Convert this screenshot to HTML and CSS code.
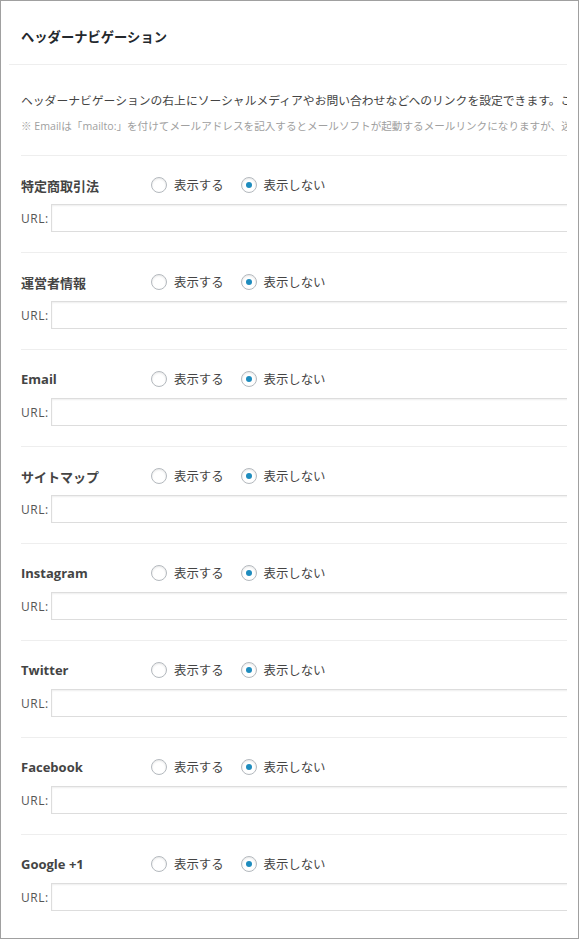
FILE: index.html
```html
<!DOCTYPE html>
<html lang="ja">
<head>
<meta charset="utf-8">
<title>ヘッダーナビゲーション</title>
<link rel="stylesheet" href="styles.css">
</head>
<body>
<div class="frame">
  <div class="panel">
    <div class="panel-head">
      <h2 class="title">ヘッダーナビゲーション</h2>
    </div>
    <div class="panel-body">
      <p class="desc">ヘッダーナビゲーションの右上にソーシャルメディアやお問い合わせなどへのリンクを設定できます。ここで設定したリンクはヘッダーに表示されます。</p>
      <p class="note">※ Emailは「mailto:」を付けてメールアドレスを記入するとメールソフトが起動するメールリンクになりますが、迷惑メールの原因になる場合があります。</p>

      <div class="row">
        <div class="row-top">
          <span class="label">特定商取引法</span>
          <label class="opt"><input type="radio" class="radio" name="r1">表示する</label>
          <label class="opt"><input type="radio" class="radio" name="r1" checked>表示しない</label>
        </div>
        <div class="row-url"><span class="url-label">URL:</span><input type="text" class="url-input"></div>
      </div>

      <div class="row">
        <div class="row-top">
          <span class="label">運営者情報</span>
          <label class="opt"><input type="radio" class="radio" name="r2">表示する</label>
          <label class="opt"><input type="radio" class="radio" name="r2" checked>表示しない</label>
        </div>
        <div class="row-url"><span class="url-label">URL:</span><input type="text" class="url-input"></div>
      </div>

      <div class="row">
        <div class="row-top">
          <span class="label">Email</span>
          <label class="opt"><input type="radio" class="radio" name="r3">表示する</label>
          <label class="opt"><input type="radio" class="radio" name="r3" checked>表示しない</label>
        </div>
        <div class="row-url"><span class="url-label">URL:</span><input type="text" class="url-input"></div>
      </div>

      <div class="row">
        <div class="row-top">
          <span class="label">サイトマップ</span>
          <label class="opt"><input type="radio" class="radio" name="r4">表示する</label>
          <label class="opt"><input type="radio" class="radio" name="r4" checked>表示しない</label>
        </div>
        <div class="row-url"><span class="url-label">URL:</span><input type="text" class="url-input"></div>
      </div>

      <div class="row">
        <div class="row-top">
          <span class="label">Instagram</span>
          <label class="opt"><input type="radio" class="radio" name="r5">表示する</label>
          <label class="opt"><input type="radio" class="radio" name="r5" checked>表示しない</label>
        </div>
        <div class="row-url"><span class="url-label">URL:</span><input type="text" class="url-input"></div>
      </div>

      <div class="row">
        <div class="row-top">
          <span class="label">Twitter</span>
          <label class="opt"><input type="radio" class="radio" name="r6">表示する</label>
          <label class="opt"><input type="radio" class="radio" name="r6" checked>表示しない</label>
        </div>
        <div class="row-url"><span class="url-label">URL:</span><input type="text" class="url-input"></div>
      </div>

      <div class="row">
        <div class="row-top">
          <span class="label">Facebook</span>
          <label class="opt"><input type="radio" class="radio" name="r7">表示する</label>
          <label class="opt"><input type="radio" class="radio" name="r7" checked>表示しない</label>
        </div>
        <div class="row-url"><span class="url-label">URL:</span><input type="text" class="url-input"></div>
      </div>

      <div class="row">
        <div class="row-top">
          <span class="label">Google +1</span>
          <label class="opt"><input type="radio" class="radio" name="r8">表示する</label>
          <label class="opt"><input type="radio" class="radio" name="r8" checked>表示しない</label>
        </div>
        <div class="row-url"><span class="url-label">URL:</span><input type="text" class="url-input"></div>
      </div>
    </div>
  </div>
</div>
</body>
</html>
```

FILE: styles.css
```css
html, body {
  margin: 0;
  padding: 0;
  background: #fff;
}

body {
  font-family: "Open Sans", "Noto Sans CJK JP", sans-serif;
  color: #444;
}

.frame {
  box-sizing: border-box;
  width: 579px;
  height: 939px;
  border: 1px solid #a0a0a0;
  background: #fff;
  padding: 0 11px 0 8px;
}

.panel {
  height: 100%;
  overflow: hidden;
}

.panel-head {
  padding: 26px 12px 17px;
  border-bottom: 1px solid #eeeeee;
}

.title {
  margin: 0;
  font-size: 13.3px;
  line-height: 20px;
  font-weight: 700;
  color: #23282d;
  font-family: "Noto Sans CJK JP", sans-serif;
}

.panel-body {
  padding-left: 12px;
}

.desc {
  margin: 24px 0 0;
  font-size: 11.8px;
  line-height: 21px;
  color: #444;
  white-space: nowrap;
  font-family: "Noto Sans CJK JP", sans-serif;
}

.note {
  margin: 6px 0 19px;
  font-size: 10.6px;
  line-height: 20px;
  color: #a0a0a0;
  white-space: nowrap;
  font-family: "Open Sans", "Noto Sans CJK JP", sans-serif;
}

.row {
  border-top: 1px solid #eeeeee;
  padding: 19px 0 20px;
}

.row-top {
  display: flex;
  align-items: center;
  height: 20px;
}

.label {
  width: 130px;
  flex: 0 0 130px;
  font-size: 13px;
  font-weight: 700;
  color: #444;
  font-family: "Open Sans", "Noto Sans CJK JP", sans-serif;
}

.opt {
  display: flex;
  align-items: center;
  margin-right: 17px;
  font-size: 12.4px;
  color: #444;
  font-family: "Noto Sans CJK JP", sans-serif;
}

.radio {
  -webkit-appearance: none;
  appearance: none;
  box-sizing: border-box;
  width: 16px;
  height: 16px;
  margin: 0 7px 0 0;
  border: 1px solid #b4b9be;
  border-radius: 50%;
  background: #fff;
  box-shadow: inset 0 1px 2px rgba(0, 0, 0, 0.1);
  display: flex;
  align-items: center;
  justify-content: center;
}

.radio:checked::before {
  content: "";
  width: 6px;
  height: 6px;
  border-radius: 50%;
  background: #1e8cbe;
}

.row-url {
  display: flex;
  align-items: center;
  margin-top: 9px;
}

.url-label {
  width: 30px;
  flex: 0 0 30px;
  font-size: 12px;
  color: #555;
  letter-spacing: 0.5px;
}

.url-input {
  box-sizing: border-box;
  flex: 0 0 600px;
  width: 600px;
  height: 28px;
  margin: 0;
  padding: 3px 5px;
  border: 1px solid #dddddd;
  background: #fff;
  box-shadow: inset 0 1px 2px rgba(0, 0, 0, 0.07);
  outline: none;
}
```
